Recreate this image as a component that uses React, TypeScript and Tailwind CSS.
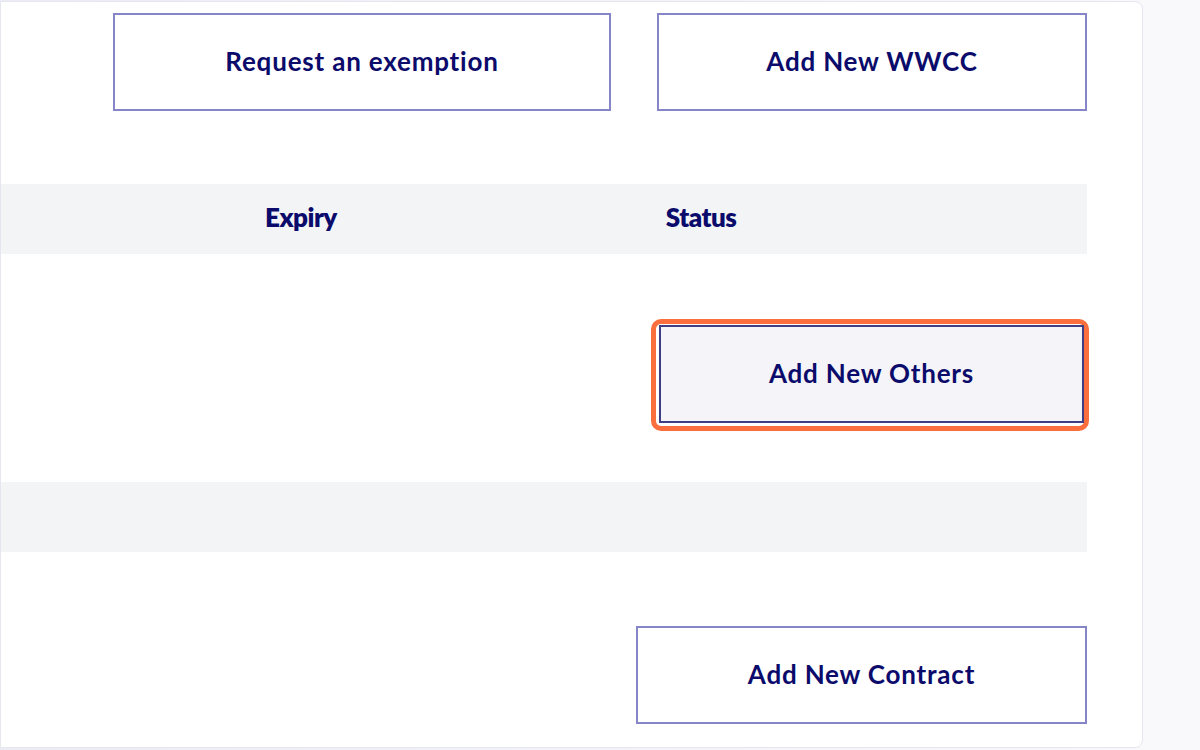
const NAVY = "text-[#0b0b6b]"

function OutlineButton({ label, className }: { label: string; className: string }) {
  return (
    <button
      className={`flex items-center justify-center border-2 border-[#8585c8] bg-white pb-[2px] text-[26px] font-bold tracking-[0.8px] ${NAVY} ${className}`}
    >
      {label}
    </button>
  )
}

export default function App() {
  return (
    <div
      className="flex h-[750px] w-[1200px] overflow-hidden bg-gradient-to-r from-[#ececf5] to-[#f9f9fc]"
      style={{ fontFamily: "Lato, 'Noto Sans', sans-serif" }}
    >
      {/* content panel */}
      <div className="mt-px mb-[2px] flex w-[1143px] shrink-0 flex-col rounded-r-lg border border-[#e6e6ee] bg-white">
        {/* top actions */}
        <div className="flex gap-[46px] pt-[11px] pl-[112px]">
          <OutlineButton label="Request an exemption" className="h-[98px] w-[498px]" />
          <OutlineButton label="Add New WWCC" className="h-[98px] w-[430px]" />
        </div>

        {/* table header */}
        <div className={`mt-[73px] flex h-[70px] w-[1086px] items-center bg-[#f3f4f6] pb-[3px] text-[26px] font-extrabold ${NAVY}`}>
          <span className="ml-[264px] tracking-[-0.5px]">Expiry</span>
          <span className="ml-[329px] tracking-[-0.5px]">Status</span>
        </div>

        {/* others row */}
        <div className="mt-[65px] flex pl-[650px]">
          <div className="rounded-[10px] border-[5px] border-[#fb6f3f] pt-px pr-0 pb-[3px] pl-[3px]">
            <button
              className={`flex h-[98px] w-[425px] items-center justify-center border-2 border-[#3e3e86] bg-[#f4f4f9] pb-[2px] text-[26px] font-bold tracking-[0.8px] ${NAVY}`}
            >
              Add New Others
            </button>
          </div>
        </div>

        {/* empty row */}
        <div className="mt-[51px] h-[70px] w-[1086px] bg-[#f3f4f6]" />

        {/* contract */}
        <div className="mt-[74px] flex pl-[635px]">
          <OutlineButton label="Add New Contract" className="h-[98px] w-[451px]" />
        </div>
      </div>
    </div>
  )
}
